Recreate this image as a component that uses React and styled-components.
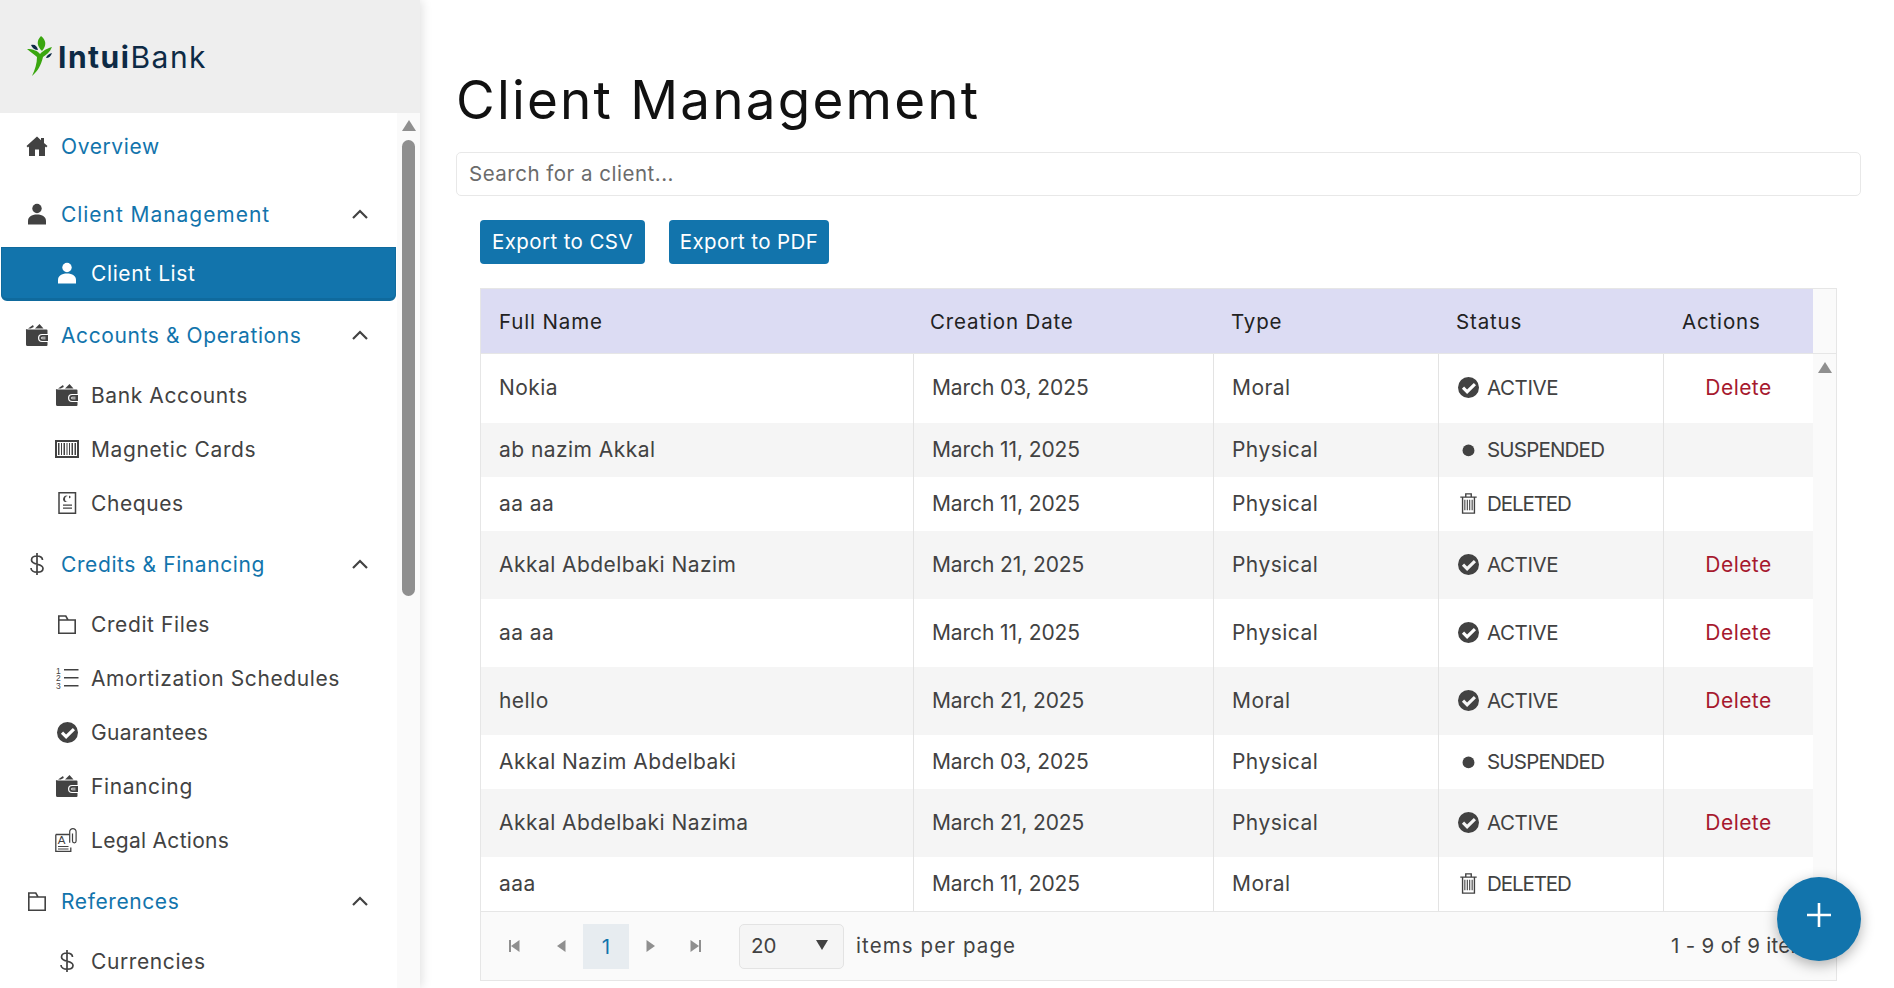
import React from "react";
import styled, { createGlobalStyle } from "styled-components";

const GlobalStyle = createGlobalStyle`
  html, body {
    margin: 0;
    height: 100%;
    overflow: hidden;
    background: #fff;
    font-family: Inter, "Open Sans", "Liberation Sans", sans-serif;
    color: #424242;
  }
  * { box-sizing: border-box; }
`;

const Page = styled.div`
  display: flex;
  width: 1894px;
  height: 988px;
  overflow: hidden;
  position: relative;
`;

const Sidebar = styled.aside`
  width: 420px;
  flex: none;
  display: flex;
  flex-direction: column;
  box-shadow: 2px 0 10px rgba(0, 0, 0, 0.12);
`;

const LogoBar = styled.div`
  height: 113px;
  flex: none;
  background: #eeeeee;
  display: flex;
  align-items: center;
  padding: 0 0 0 26px;
`;

const LogoText = styled.div`
  font-size: 30px;
  color: #0d2a45;
  letter-spacing: 1.5px;
  font-weight: 400;
  b { font-weight: 700; }
`;

const SideBody = styled.div`
  flex: 1;
  min-height: 0;
  display: flex;
`;

const Nav = styled.nav`
  width: 397px;
  flex: none;
  overflow: hidden;
  padding-top: 6px;
`;

const SideTrack = styled.div`
  flex: 1;
  background: #fafafa;
  display: flex;
  flex-direction: column;
  align-items: center;
  padding-top: 7px;
`;

const ArrowUp = styled.div`
  width: 0;
  height: 0;
  border-left: 7px solid transparent;
  border-right: 7px solid transparent;
  border-bottom: 11px solid #8f8f8f;
`;

const SideThumb = styled.div`
  width: 13px;
  height: 456px;
  margin-top: 9px;
  background: #8f8f8f;
  border-radius: 7px;
`;

const NavRow = styled.div`
  display: flex;
  align-items: center;
  height: 54px;
  flex: none;
  margin-top: ${({ $mt }) => $mt || 0}px;
  padding-left: ${({ $sub, $active }) => ($active ? 53 : $sub ? 55 : 25)}px;
  font-size: 21px;
  letter-spacing: ${({ $ls }) => $ls ?? 0.6}px;
  color: ${({ $active, $group }) => ($active ? "#fff" : $group ? "#1274ac" : "#424242")};
  background: ${({ $active }) => ($active ? "#1274ac" : "transparent")};
  border: ${({ $active }) => ($active ? "1px solid #0f6a9d" : "none")};
  border-bottom-width: ${({ $active }) => ($active ? "3px" : "0")};
  border-radius: ${({ $active }) => ($active ? "0 0 6px 6px" : "0")};
  margin-left: ${({ $active }) => ($active ? "1px" : "0")};
  width: ${({ $active }) => ($active ? "395px" : "auto")};
`;

const IconSlot = styled.span`
  width: 24px;
  height: 24px;
  flex: none;
  display: flex;
  align-items: center;
  justify-content: center;
  margin-right: 12px;
  color: ${({ $light }) => ($light ? "#fff" : "#424242")};
`;

const NavLabel = styled.span`
  flex: 1;
`;

const Chevron = styled.svg`
  width: 16px;
  height: 10px;
  margin-right: 29px;
  fill: none;
  stroke: #424242;
  stroke-width: 2.2;
`;

const Main = styled.main`
  flex: 1;
  min-width: 0;
  padding: 0 33px 0 36px;
`;

const Title = styled.h1`
  margin: 0;
  padding-top: 62px;
  height: 152px;
  font-size: 53px;
  font-weight: 400;
  color: #111;
  line-height: 76px;
  letter-spacing: 2.2px;
  white-space: nowrap;
`;

const Search = styled.div`
  height: 44px;
  border: 1px solid #e8e8e8;
  border-radius: 5px;
  display: flex;
  align-items: center;
  padding: 0 0 1px 12px;
  font-size: 20.5px;
  letter-spacing: 0.5px;
  color: #6b6b6b;
`;

const Toolbar = styled.div`
  display: flex;
  gap: 24px;
  padding: 24px 0 24px 24px;
`;

const ExportButton = styled.button`
  height: 44px;
  width: ${({ $w }) => $w}px;
  border: none;
  border-radius: 4px;
  background: #1274ac;
  color: #fff;
  font: inherit;
  font-size: 20.5px;
  letter-spacing: 0.4px;
  white-space: nowrap;
  padding: 0 0 2px;
`;

const Grid = styled.div`
  margin-left: 24px;
  width: 1357px;
  border: 1px solid #e6e6e6;
  background: #fafafa;
  height: 693px;
  display: flex;
  flex-direction: column;
`;

const HeadRow = styled.div`
  display: grid;
  grid-template-columns: 431px 301px 225px 226px 149px;
  height: 65px;
  flex: none;
  border-bottom: 1px solid #e6e6e6;
`;

const HeadCell = styled.div`
  background: #dcdcf3;
  display: flex;
  align-items: center;
  padding-left: 18px;
  font-size: 20.5px;
  letter-spacing: 0.85px;
  color: #222;
`;

const GridBody = styled.div`
  flex: 1;
  min-height: 0;
  display: flex;
`;

const Rows = styled.div`
  width: 1332px;
  flex: none;
`;

const Row = styled.div`
  display: grid;
  grid-template-columns: 433px 300px 225px 225px 149px;
  height: ${({ $h }) => $h}px;
  background: ${({ $alt }) => ($alt ? "#f5f5f5" : "#fff")};
`;

const Cell = styled.div`
  display: flex;
  align-items: center;
  padding: 0 0 2px 18px;
  font-size: 21px;
  letter-spacing: ${({ $ls }) => $ls ?? 0.45}px;
  color: #424242;
  border-right: 1px solid #e3e3e3;
  &:last-child { border-right: none; }
`;

const StatusCell = styled(Cell)`
  padding-left: 19px;
  gap: 8px;
  font-size: 20.5px;
`;

const StatusIcon = styled.span`
  width: 21px;
  height: 21px;
  flex: none;
  display: flex;
  color: #424242;
`;

const DeleteLink = styled.span`
  display: block;
  width: 100%;
  text-align: center;
  color: #a6192e;
  padding-right: 18px;
`;

const GridTrack = styled.div`
  flex: 1;
  display: flex;
  justify-content: center;
  padding-top: 8px;
`;

const Pager = styled.div`
  height: 69px;
  flex: none;
  border-top: 1px solid #e6e6e6;
  display: flex;
  align-items: center;
  padding-left: 10px;
  font-size: 20.5px;
`;

const PagerIcon = styled.span`
  width: ${({ $w }) => $w || 44}px;
  display: flex;
  justify-content: center;
  color: #8f8f8f;
`;

const PageNumber = styled.span`
  width: 46px;
  height: 45px;
  display: flex;
  align-items: center;
  justify-content: center;
  background: #e7ecf0;
  color: #1274ac;
`;

const PageSize = styled.div`
  margin-left: 22px;
  width: 105px;
  height: 45px;
  border: 1px solid #e3e3e3;
  border-radius: 5px;
  background: #f5f5f5;
  display: flex;
  align-items: center;
  justify-content: space-between;
  padding: 0 15px 2px 11px;
`;

const PageSizeCaret = styled.span`
  width: 0;
  height: 0;
  border-left: 6px solid transparent;
  border-right: 6px solid transparent;
  border-top: 10px solid #424242;
`;

const PerPage = styled.span`
  margin: -2px 0 0 12px;
  letter-spacing: 1.1px;
`;

const PagerInfo = styled.span`
  margin: -2px 0 0 auto;
  padding-right: 16px;
  letter-spacing: 0.3px;
`;

const Fab = styled.button`
  position: absolute;
  left: 1777px;
  top: 877px;
  width: 84px;
  height: 84px;
  border: none;
  border-radius: 50%;
  background: #1274ac;
  box-shadow: 0 4px 14px rgba(0, 0, 0, 0.3);
  display: flex;
  align-items: center;
  justify-content: center;
  padding: 0 0 8px;
`;

const Svg = ({ size = 24, children }) => (
  <svg width={size} height={size} viewBox="0 0 24 24" fill="currentColor" aria-hidden="true">
    {children}
  </svg>
);

const HomeIcon = () => (
  <Svg>
    <path d="M12 2.5 1.5 12l1.4 1.500L4 12.600V22h6v-6.500h4V22h6v-9.400l1.100.9 1.400-1.500L19 8.900V4h-3v2.200z" />
  </Svg>
);

const UserIcon = () => (
  <Svg>
    <circle cx="12" cy="6.500" r="4.700" />
    <path d="M3 22.500v-3.500c0-4 3.500-6.500 9-6.500s9 2.500 9 6.500v3.500z" />
  </Svg>
);

const WalletIcon = () => (
  <Svg>
    <path d="M3 5.500 8 2l.8 2-3 1.500zM10 5.500 14.500 1l4 4.500z" />
    <path fillRule="evenodd" d="M2.500 6.500h19a1 1 0 0 1 1 1V11H17a4 4 0 0 0 0 8h5.500v3a1 1 0 0 1-1 1h-19a1.500 1.500 0 0 1-1.500-1.500v-14a1 1 0 0 1 1-1.500z" />
    <path fillRule="evenodd" d="M17.200 12H23v6h-5.800a3 3 0 0 1 0-6zm.3 1.700a1.300 1.300 0 1 0 0 2.600h3v-.8h-3a.5.5 0 1 1 0-1h3v-.8z" />
  </Svg>
);

const BarcodeIcon = () => (
  <Svg>
    <path fillRule="evenodd" d="M0 3h24v18H0zM2 5v14h20V5z" />
    <path d="M3 6h1.500v12H3zM6 6h1v12H6zM8.500 6H10v12H8.500zM11.500 6h1v12h-1zM14 6h1v12h-1zM16.500 6H18v12h-1.500zM19.500 6H21v12h-1.500z" />
  </Svg>
);

const ChequeIcon = () => (
  <Svg>
    <path fill="none" stroke="currentColor" strokeWidth="1.500" d="M4 1.700h16.500v20.600H4z" />
    <path d="M13 5a3 3 0 1 0 0 6H10a3 3 0 0 1 3-6zM14 4.500l2 1.500-2 1.500z" />
    <path d="M8 13.500h9v1.300H8zM8 16.500h9v1.300H8z" />
  </Svg>
);

const FolderIcon = () => (
  <Svg>
    <path fill="none" stroke="currentColor" strokeWidth="1.600" d="M3.800 21.200V4h7l2.200 4h7.200v13.200zM3.800 8H13" />
  </Svg>
);

const ListIcon = () => (
  <Svg>
    <path d="M9 3h14.500v1.500H9zM9 11h14.500v1.500H9zM9 19h14.500v1.500H9z" />
    <text x="1" y="7.500" fontSize="8.500" fontFamily="Liberation Sans, sans-serif">1</text>
    <text x="1" y="15" fontSize="8.500" fontFamily="Liberation Sans, sans-serif">2</text>
    <text x="1" y="23" fontSize="8.500" fontFamily="Liberation Sans, sans-serif">3</text>
  </Svg>
);

const CheckIcon = () => (
  <svg width="21" height="21" viewBox="0.8 0.8 22.400 22.400" fill="currentColor" aria-hidden="true">
    <path fillRule="evenodd" d="M12 .8a11.200 11.200 0 1 1 0 22.400A11.200 11.200 0 0 1 12 .8zm5.700 6.400-7.200 7-3.200-3.200-2.300 2.300 5.500 5.500 9.500-9.300z" />
  </svg>
);

const LegalIcon = () => (
  <Svg>
    <path fill="none" stroke="currentColor" strokeWidth="1.300" d="M.8 6.500H15M.8 6.500v17h15v-4" />
    <path d="M3 20.500h10.500v1.100H3zM3 18h10.500v1.100H3z" />
    <text x="2.800" y="16" fontSize="11.500" fontFamily="Liberation Sans, sans-serif">A</text>
    <path fill="none" stroke="currentColor" strokeWidth="1.200" d="M17.500 5.500v7.500a1.800 1.800 0 0 0 3.600 0V3.800a3.200 3.200 0 0 0-6.400 0v11" />
  </Svg>
);

const DollarIcon = () => (
  <Svg>
    <path fill="none" stroke="currentColor" strokeWidth="1.700" d="M17.500 8c0-2.600-2.500-4-5.500-4S6.500 5.400 6.500 8c0 6 11.500 2.500 11.500 8.500 0 2.500-2.700 3.700-6 3.700s-6-1.400-6-4.200M12 1v22" />
  </Svg>
);

const TrashIcon = () => (
  <svg width="21" height="21" viewBox="0.5 0.5 23 23" fill="currentColor" aria-hidden="true">
    <path fill="none" stroke="currentColor" strokeWidth="1.500" d="M3 5h18M9 5V1.500h6V5M5.500 5v17.500h13V5" />
    <path fill="none" stroke="currentColor" strokeWidth="1.200" d="M8 8v11.500M10.700 8v11.500M13.300 8v11.500M16 8v11.500" />
  </svg>
);

const DotIcon = () => (
  <svg width="21" height="21" viewBox="0 0 24 24" fill="currentColor" aria-hidden="true">
    <circle cx="12" cy="13" r="6.800" />
  </svg>
);

const PagerGlyph = ({ dir, edge }) => (
  <svg width="14" height="14" viewBox="0 0 14 14" fill="currentColor" aria-hidden="true">
    <path d={dir === "left" ? "M11.500 1v12L3 7z" : "M2.500 1v12L11 7z"} />
    {edge && <path d={dir === "left" ? "M1 1h2v12H1z" : "M11 1h2v12h-2z"} />}
  </svg>
);

const LeafLogo = () => (
  <svg width="32" height="44" viewBox="0 0 32 44" aria-hidden="true">
    <path fill="#3aa60f" d="M15 1c5 4 6 9 1 15-5-5-6-10-1-15z" />
    <path fill="#3aa60f" d="M1 14c6 0 11 2 13 5 2-2 5-5 12-7-2 5-6 8-9 10-2 8-5 14-11 19 3-6 5-13 5-19-3-3-7-5-10-8z" />
    <path fill="#0d2a45" d="M5 10c4-1 6 1 7 5-3 0-6-2-7-5zM20 23c1-3 3-4 6-5-1 3-3 5-6 5z" />
  </svg>
);

const navItems = [
  { label: "Overview", icon: <HomeIcon />, group: true },
  { label: "Client Management", icon: <UserIcon />, group: true, open: true, mt: 14, ls: 0.95 },
  { label: "Client List", icon: <UserIcon />, sub: true, active: true, mt: 6 },
  { label: "Accounts & Operations", icon: <WalletIcon />, group: true, open: true, mt: 7 },
  { label: "Bank Accounts", icon: <WalletIcon />, sub: true, mt: 6 },
  { label: "Magnetic Cards", icon: <BarcodeIcon />, sub: true },
  { label: "Cheques", icon: <ChequeIcon />, sub: true },
  { label: "Credits & Financing", icon: <DollarIcon />, group: true, open: true, mt: 7 },
  { label: "Credit Files", icon: <FolderIcon />, sub: true, mt: 6 },
  { label: "Amortization Schedules", icon: <ListIcon />, sub: true },
  { label: "Guarantees", icon: <CheckIcon />, sub: true, ls: 0.3 },
  { label: "Financing", icon: <WalletIcon />, sub: true },
  { label: "Legal Actions", icon: <LegalIcon />, sub: true, ls: 0.3 },
  { label: "References", icon: <FolderIcon />, group: true, open: true, mt: 7 },
  { label: "Currencies", icon: <DollarIcon />, sub: true, mt: 6 },
];

const clients = [
  { name: "Nokia", date: "March 03, 2025", type: "Moral", status: "ACTIVE", h: 69 },
  { name: "ab nazim Akkal", date: "March 11, 2025", type: "Physical", status: "SUSPENDED", h: 54 },
  { name: "aa aa", date: "March 11, 2025", type: "Physical", status: "DELETED", h: 54 },
  { name: "Akkal Abdelbaki Nazim", date: "March 21, 2025", type: "Physical", status: "ACTIVE", h: 68 },
  { name: "aa aa", date: "March 11, 2025", type: "Physical", status: "ACTIVE", h: 68 },
  { name: "hello", date: "March 21, 2025", type: "Moral", status: "ACTIVE", h: 68 },
  { name: "Akkal Nazim Abdelbaki", date: "March 03, 2025", type: "Physical", status: "SUSPENDED", h: 54 },
  { name: "Akkal Abdelbaki Nazima", date: "March 21, 2025", type: "Physical", status: "ACTIVE", h: 68 },
  { name: "aaa", date: "March 11, 2025", type: "Moral", status: "DELETED", h: 54 },
];

const statusKinds = {
  ACTIVE: { icon: <CheckIcon />, ls: -0.4 },
  SUSPENDED: { icon: <DotIcon />, ls: -0.8 },
  DELETED: { icon: <TrashIcon />, ls: -1.1 },
};

const App = () => {
  return (
    <Page>
      <GlobalStyle />
      <Sidebar>
        <LogoBar>
          <LeafLogo />
          <LogoText>
            <b>Intui</b>Bank
          </LogoText>
        </LogoBar>
        <SideBody>
          <Nav>
            {navItems.map((item) => (
              <NavRow
                key={item.label}
                $mt={item.mt}
                $ls={item.ls}
                $sub={item.sub}
                $group={item.group}
                $active={item.active}
              >
                <IconSlot $light={item.active}>{item.icon}</IconSlot>
                <NavLabel>{item.label}</NavLabel>
                {item.open && (
                  <Chevron viewBox="0 0 16 10">
                    <path d="M1 9l7-7 7 7" />
                  </Chevron>
                )}
              </NavRow>
            ))}
          </Nav>
          <SideTrack>
            <ArrowUp />
            <SideThumb />
          </SideTrack>
        </SideBody>
      </Sidebar>
      <Main>
        <Title>Client Management</Title>
        <Search>Search for a client...</Search>
        <Toolbar>
          <ExportButton $w={165}>Export to CSV</ExportButton>
          <ExportButton $w={160}>Export to PDF</ExportButton>
        </Toolbar>
        <Grid>
          <HeadRow>
            <HeadCell>Full Name</HeadCell>
            <HeadCell>Creation Date</HeadCell>
            <HeadCell>Type</HeadCell>
            <HeadCell>Status</HeadCell>
            <HeadCell>Actions</HeadCell>
          </HeadRow>
          <GridBody>
            <Rows>
              {clients.map((c, i) => (
                <Row key={i} $h={c.h} $alt={i % 2 === 1}>
                  <Cell>{c.name}</Cell>
                  <Cell $ls={-0.1}>{c.date}</Cell>
                  <Cell>{c.type}</Cell>
                  <StatusCell $ls={statusKinds[c.status].ls}>
                    <StatusIcon>{statusKinds[c.status].icon}</StatusIcon>
                    {c.status}
                  </StatusCell>
                  <Cell>{c.status === "ACTIVE" && <DeleteLink>Delete</DeleteLink>}</Cell>
                </Row>
              ))}
            </Rows>
            <GridTrack>
              <ArrowUp />
            </GridTrack>
          </GridBody>
          <Pager>
            <PagerIcon $w={48}><PagerGlyph dir="left" edge /></PagerIcon>
            <PagerIcon><PagerGlyph dir="left" /></PagerIcon>
            <PageNumber>1</PageNumber>
            <PagerIcon><PagerGlyph dir="right" /></PagerIcon>
            <PagerIcon><PagerGlyph dir="right" edge /></PagerIcon>
            <PageSize>
              20
              <PageSizeCaret />
            </PageSize>
            <PerPage>items per page</PerPage>
            <PagerInfo>1 - 9 of 9 items</PagerInfo>
          </Pager>
        </Grid>
      </Main>
      <Fab aria-label="Add">
        <svg width="24" height="24" viewBox="0 0 24 24" fill="none" stroke="#fff" strokeWidth="2.600">
          <path d="M12 0v24M0 12h24" />
        </svg>
      </Fab>
    </Page>
  );
};

export default App;
